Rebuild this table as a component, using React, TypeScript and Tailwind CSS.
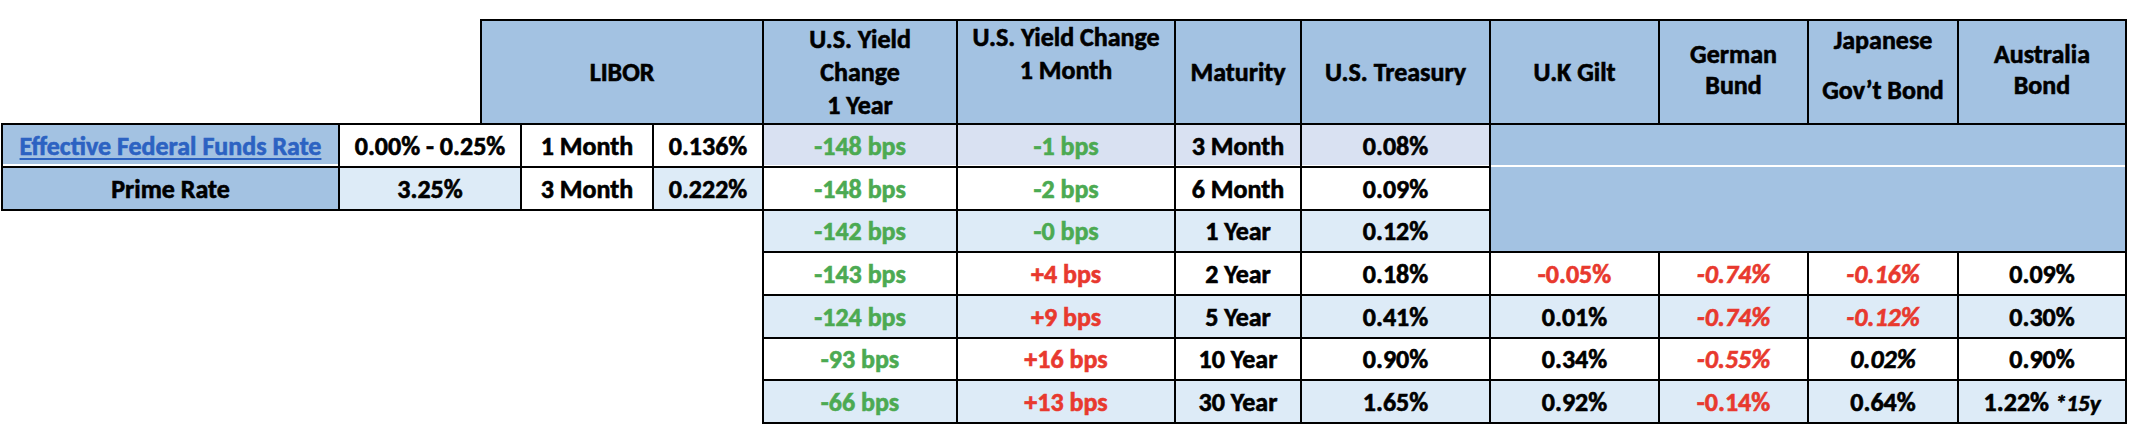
import React from "react";

const HB = "bg-[#a3c2e2]";
const LB = "bg-[#ddebf7]";
const LV = "bg-[#d9e1f2]";
const WH = "bg-white";
const G = "text-[#4caa52]";
const R = "text-[#e8392e]";
const cell = "border-2 border-black text-center align-middle p-0";

type C = { t: React.ReactNode; cls?: string };

const rows: { bg: string; cells: C[] }[] = [
  {
    bg: LB,
    cells: [
      { t: "-142 bps", cls: G },
      { t: "-0 bps", cls: G },
      { t: "1 Year" },
      { t: "0.12%" },
    ],
  },
  {
    bg: WH,
    cells: [
      { t: "-143 bps", cls: G },
      { t: "+4 bps", cls: R },
      { t: "2 Year" },
      { t: "0.18%" },
      { t: "-0.05%", cls: R },
      { t: "-0.74%", cls: R + " italic" },
      { t: "-0.16%", cls: R + " italic" },
      { t: "0.09%" },
    ],
  },
  {
    bg: LB,
    cells: [
      { t: "-124 bps", cls: G },
      { t: "+9 bps", cls: R },
      { t: "5 Year" },
      { t: "0.41%" },
      { t: "0.01%" },
      { t: "-0.74%", cls: R + " italic" },
      { t: "-0.12%", cls: R + " italic" },
      { t: "0.30%" },
    ],
  },
  {
    bg: WH,
    cells: [
      { t: "-93 bps", cls: G },
      { t: "+16 bps", cls: R },
      { t: "10 Year" },
      { t: "0.90%" },
      { t: "0.34%" },
      { t: "-0.55%", cls: R + " italic" },
      { t: "0.02%", cls: "italic" },
      { t: "0.90%" },
    ],
  },
  {
    bg: LB,
    cells: [
      { t: "-66 bps", cls: G },
      { t: "+13 bps", cls: R },
      { t: "30 Year" },
      { t: "1.65%" },
      { t: "0.92%" },
      { t: "-0.14%", cls: R },
      { t: "0.64%" },
      {
        t: (
          <>
            1.22% <span className="italic text-[23px]">*15y</span>
          </>
        ),
      },
    ],
  },
];

const heights = ["h-[42px]", "h-[43px]", "h-[43px]", "h-[42px]", "h-[43px]"];

export default function App() {
  return (
    <div
      className="w-[2142px] h-[436px] bg-white pt-[19px] pl-[1px] text-black font-bold text-[26px] [-webkit-text-stroke-width:0.6px]"
      style={{ fontFamily: "Carlito, Lato, 'Liberation Sans', sans-serif" }}
    >
      <table className="table-fixed border-collapse w-[2124px] leading-none">
        <colgroup>
          <col className="w-[337px]" />
          <col className="w-[142px]" />
          <col className="w-[40px]" />
          <col className="w-[132px]" />
          <col className="w-[110px]" />
          <col className="w-[194px]" />
          <col className="w-[218px]" />
          <col className="w-[126px]" />
          <col className="w-[189px]" />
          <col className="w-[169px]" />
          <col className="w-[149px]" />
          <col className="w-[150px]" />
          <col className="w-[168px]" />
        </colgroup>
        <tbody>
          <tr className="h-[104px]">
            <td colSpan={2} className="p-0" />
            <td colSpan={3} className={`${cell} ${HB}`}>LIBOR</td>
            <td className={`${cell} ${HB} leading-[33px]`}>
              <div>U.S. Yield</div>
              <div>Change</div>
              <div>1 Year</div>
            </td>
            <td className={`${cell} ${HB} leading-[33px] !align-top`}>
              <div>U.S. Yield Change</div>
              <div>1 Month</div>
            </td>
            <td className={`${cell} ${HB}`}>Maturity</td>
            <td className={`${cell} ${HB}`}>U.S. Treasury</td>
            <td className={`${cell} ${HB}`}>U.K Gilt</td>
            <td className={`${cell} ${HB} leading-[31px]`}>
              <div className="pb-[4px]">
                <div>German</div>
                <div>Bund</div>
              </div>
            </td>
            <td className={`${cell} ${HB}`}>
              <div className="flex flex-col items-center gap-[24px] pb-[14px] leading-[26px]">
                <div>Japanese</div>
                <div>Gov’t Bond</div>
              </div>
            </td>
            <td className={`${cell} ${HB} leading-[31px]`}>
              <div className="pb-[4px]">
                <div>Australia</div>
                <div>Bond</div>
              </div>
            </td>
          </tr>
          <tr className="h-[43px]">
            <td className={`${cell} ${HB} shadow-[inset_0_-2px_0_white]`}>
              <a className="text-[#2c62c2] underline underline-offset-[3px] decoration-2">
                Effective Federal Funds Rate
              </a>
            </td>
            <td colSpan={2} className={`${cell} ${WH}`}>0.00% - 0.25%</td>
            <td className={`${cell} ${WH}`}>1 Month</td>
            <td className={`${cell} ${WH}`}>0.136%</td>
            <td className={`${cell} ${LV} ${G} shadow-[inset_0_-1px_0_white]`}>-148 bps</td>
            <td className={`${cell} ${LV} ${G} shadow-[inset_0_-1px_0_white]`}>-1 bps</td>
            <td className={`${cell} ${LV} shadow-[inset_0_-1px_0_white]`}>3 Month</td>
            <td className={`${cell} ${LV} shadow-[inset_0_-1px_0_white]`}>0.08%</td>
            <td
              colSpan={4}
              className={`border-2 border-black border-b-0 p-0 ${HB} shadow-[inset_0_-2px_0_white]`}
            />
          </tr>
          <tr className="h-[43px]">
            <td className={`${cell} ${HB}`}>Prime Rate</td>
            <td colSpan={2} className={`${cell} ${LB}`}>3.25%</td>
            <td className={`${cell} ${WH}`}>3 Month</td>
            <td className={`${cell} ${LB}`}>0.222%</td>
            <td className={`${cell} ${WH} ${G}`}>-148 bps</td>
            <td className={`${cell} ${WH} ${G}`}>-2 bps</td>
            <td className={`${cell} ${WH}`}>6 Month</td>
            <td className={`${cell} ${WH}`}>0.09%</td>
            <td
              colSpan={4}
              rowSpan={2}
              className={`border-2 border-black border-t-0 p-0 ${HB}`}
            />
          </tr>
          {rows.map((r, i) => (
            <tr key={i} className={heights[i]}>
              <td colSpan={5} className="p-0" />
              {r.cells.map((c, j) => (
                <td key={j} className={`${cell} ${r.bg} ${c.cls ?? ""}`}>
                  {c.t}
                </td>
              ))}
            </tr>
          ))}
        </tbody>
      </table>
    </div>
  );
}
